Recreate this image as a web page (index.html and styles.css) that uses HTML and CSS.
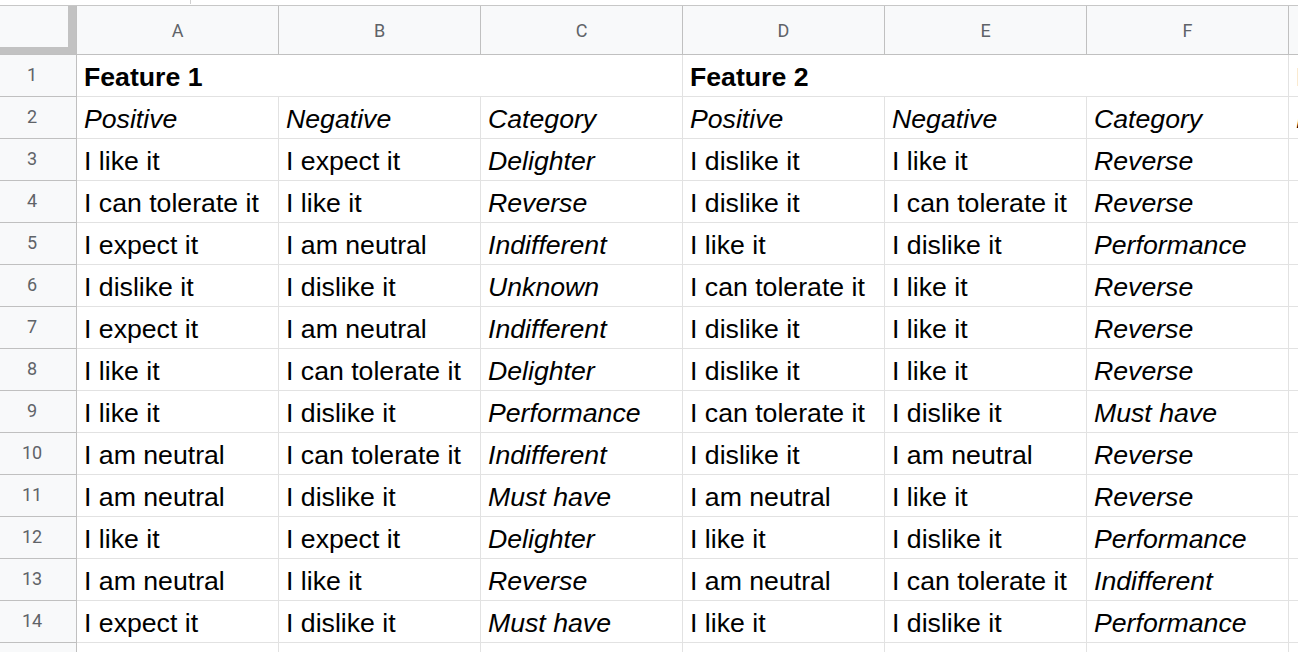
FILE: index.html
```html
<!DOCTYPE html>
<html>
<head>
<meta charset="utf-8">
<link rel="stylesheet" href="styles.css">
</head>
<body>
<div class="topbar"><span class="tick"></span></div>
<div class="sheet">
  <div class="corner"><div class="corner-in"></div></div>
  <div class="ch">A</div><div class="ch">B</div><div class="ch">C</div><div class="ch">D</div><div class="ch">E</div><div class="ch">F</div><div class="ch">G</div>

  <div class="rh">1</div><div class="c b span3">Feature 1</div><div class="c b span3">Feature 2</div><div class="c b faint">Feature 3</div>
  <div class="rh">2</div><div class="c i">Positive</div><div class="c i">Negative</div><div class="c i">Category</div><div class="c i">Positive</div><div class="c i">Negative</div><div class="c i">Category</div><div class="c i">Positive</div>
  <div class="rh">3</div><div class="c">I like it</div><div class="c">I expect it</div><div class="c i">Delighter</div><div class="c">I dislike it</div><div class="c">I like it</div><div class="c i">Reverse</div><div class="c"></div>
  <div class="rh">4</div><div class="c">I can tolerate it</div><div class="c">I like it</div><div class="c i">Reverse</div><div class="c">I dislike it</div><div class="c">I can tolerate it</div><div class="c i">Reverse</div><div class="c"></div>
  <div class="rh">5</div><div class="c">I expect it</div><div class="c">I am neutral</div><div class="c i">Indifferent</div><div class="c">I like it</div><div class="c">I dislike it</div><div class="c i">Performance</div><div class="c"></div>
  <div class="rh">6</div><div class="c">I dislike it</div><div class="c">I dislike it</div><div class="c i">Unknown</div><div class="c">I can tolerate it</div><div class="c">I like it</div><div class="c i">Reverse</div><div class="c"></div>
  <div class="rh">7</div><div class="c">I expect it</div><div class="c">I am neutral</div><div class="c i">Indifferent</div><div class="c">I dislike it</div><div class="c">I like it</div><div class="c i">Reverse</div><div class="c"></div>
  <div class="rh">8</div><div class="c">I like it</div><div class="c">I can tolerate it</div><div class="c i">Delighter</div><div class="c">I dislike it</div><div class="c">I like it</div><div class="c i">Reverse</div><div class="c"></div>
  <div class="rh">9</div><div class="c">I like it</div><div class="c">I dislike it</div><div class="c i">Performance</div><div class="c">I can tolerate it</div><div class="c">I dislike it</div><div class="c i">Must have</div><div class="c"></div>
  <div class="rh">10</div><div class="c">I am neutral</div><div class="c">I can tolerate it</div><div class="c i">Indifferent</div><div class="c">I dislike it</div><div class="c">I am neutral</div><div class="c i">Reverse</div><div class="c"></div>
  <div class="rh">11</div><div class="c">I am neutral</div><div class="c">I dislike it</div><div class="c i">Must have</div><div class="c">I am neutral</div><div class="c">I like it</div><div class="c i">Reverse</div><div class="c"></div>
  <div class="rh">12</div><div class="c">I like it</div><div class="c">I expect it</div><div class="c i">Delighter</div><div class="c">I like it</div><div class="c">I dislike it</div><div class="c i">Performance</div><div class="c"></div>
  <div class="rh">13</div><div class="c">I am neutral</div><div class="c">I like it</div><div class="c i">Reverse</div><div class="c">I am neutral</div><div class="c">I can tolerate it</div><div class="c i">Indifferent</div><div class="c"></div>
  <div class="rh">14</div><div class="c">I expect it</div><div class="c">I dislike it</div><div class="c i">Must have</div><div class="c">I like it</div><div class="c">I dislike it</div><div class="c i">Performance</div><div class="c"></div>
  <div class="rh">15</div><div class="c"></div><div class="c"></div><div class="c"></div><div class="c"></div><div class="c"></div><div class="c"></div><div class="c"></div>
</div>
</body>
</html>
```

FILE: styles.css
```css
html, body {
  margin: 0;
  padding: 0;
  background: #ffffff;
  overflow: hidden;
  width: 1298px;
  height: 652px;
}

.topbar {
  height: 5px;
  border-bottom: 1px solid #c7c7c7;
  display: flex;
  padding-left: 190px;
}

.tick {
  width: 1px;
  height: 4px;
  background: #d0d0d0;
}

.sheet {
  display: grid;
  grid-template-columns: 77px repeat(7, 202px);
  grid-template-rows: 49px repeat(15, 42px);
  width: 1491px;
}

.corner {
  box-sizing: border-box;
  background: #f8f9fa;
  border-right: 1px solid #c0c0c0;
  border-bottom: 1px solid #c0c0c0;
  display: flex;
}

.corner-in {
  box-sizing: border-box;
  width: 76px;
  height: 48px;
  background: #f8f9fa;
  border-right: 8px solid #c2c2c2;
  border-bottom: 7px solid #c2c2c2;
}

.ch {
  box-sizing: border-box;
  background: #f8f9fa;
  border-right: 1px solid #c0c0c0;
  border-bottom: 1px solid #c0c0c0;
  display: flex;
  align-items: center;
  justify-content: center;
  font-family: Roboto, "Liberation Sans", sans-serif;
  font-size: 18px;
  color: #5f6368;
  padding-top: 1px;
}

.rh {
  box-sizing: border-box;
  background: #f8f9fa;
  border-right: 1px solid #c0c0c0;
  border-bottom: 1px solid #c0c0c0;
  display: flex;
  align-items: center;
  justify-content: center;
  padding: 0 12px 3px 0;
  font-family: Roboto, "Liberation Sans", sans-serif;
  font-size: 18px;
  color: #5f6368;
}

.c {
  box-sizing: border-box;
  border-right: 1px solid #e2e2e2;
  border-bottom: 1px solid #e2e2e2;
  display: flex;
  align-items: center;
  padding: 3px 0 0 7px;
  font-family: "Liberation Sans", Arial, sans-serif;
  font-size: 26.67px;
  color: #000000;
  white-space: nowrap;
  overflow: hidden;
}

.span3 {
  grid-column: span 3;
}

.b {
  font-weight: bold;
}

.i {
  font-style: italic;
}

.faint {
  color: #b5b5b5;
}
```
